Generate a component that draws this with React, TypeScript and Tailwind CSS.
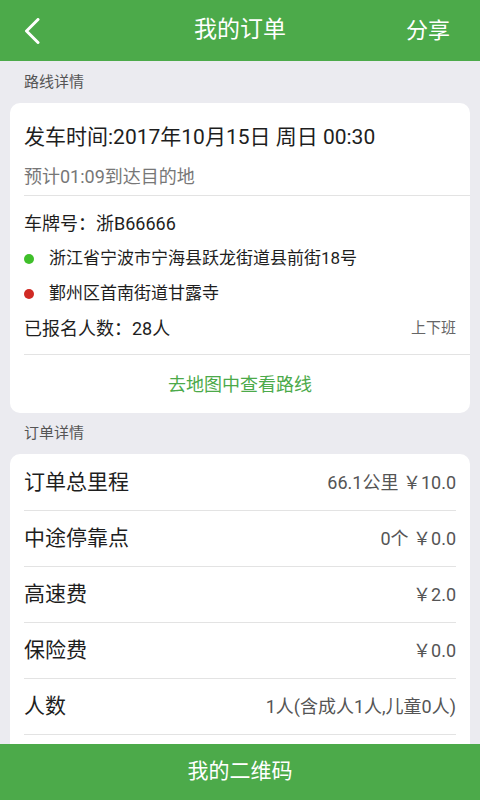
import React from 'react';

const font = { fontFamily: 'Roboto, "Noto Sans CJK SC", sans-serif' };

const feeRows = [
    { label: '订单总里程', value: '66.1公里 ￥10.0' },
    { label: '中途停靠点', value: '0个 ￥0.0' },
    { label: '高速费', value: '￥2.0' },
    { label: '保险费', value: '￥0.0' },
    { label: '人数', value: '1人(含成人1人,儿童0人)' },
];

const App = () => {
    return (
        <div className="h-[800px] w-[480px] flex flex-col bg-[#ebebf0] overflow-hidden" style={font}>
            {/* header */}
            <div className="h-[61px] shrink-0 bg-[#4caa4a] flex items-center px-[24px] text-white">
                <div className="w-[60px] flex items-center">
                    <svg width="16" height="26" viewBox="0 0 16 26" fill="none">
                        <polyline points="14,1.5 2.5,13 14,24.5" stroke="white" strokeWidth="3" strokeLinecap="round" strokeLinejoin="round" />
                    </svg>
                </div>
                <div className="flex-1 text-center text-[23px]">我的订单</div>
                <div className="w-[60px] text-right text-[22px] pr-[6px]">分享</div>
            </div>

            <div className="flex-1 overflow-hidden">
                <div className="h-[42px] flex items-center px-[24px] text-[15px] text-[#555]">路线详情</div>

                {/* route card */}
                <div className="mx-[10px] bg-white rounded-[10px] overflow-hidden">
                    <div className="pl-[14px]">
                        <div className="border-b border-[#e3e3e3] pr-[14px] pb-[5px]">
                            <div className="pt-[21px] leading-[26px] text-[21px] text-[#1e1e1e]">发车时间:2017年10月15日 周日 00:30</div>
                            <div className="mt-[14px] leading-[26px] text-[18px] text-[#777]">预计01:09到达目的地</div>
                        </div>
                        <div className="border-b border-[#e3e3e3] pr-[14px] pt-[10px] pb-[8px] text-[#1e1e1e]">
                            <div className="h-[35px] flex items-center text-[18px]">车牌号：浙B66666</div>
                            <div className="h-[35px] flex items-center text-[17px]">
                                <span className="w-[10px] h-[10px] rounded-full bg-[#3fbf2a] mr-[15px]" />
                                浙江省宁波市宁海县跃龙街道县前街18号
                            </div>
                            <div className="h-[35px] flex items-center text-[17px]">
                                <span className="w-[10px] h-[10px] rounded-full bg-[#d02a24] mr-[15px]" />
                                鄞州区首南街道甘露寺
                            </div>
                            <div className="h-[35px] flex items-center justify-between">
                                <span className="text-[18px]">已报名人数：28人</span>
                                <span className="text-[15px] text-[#666]">上下班</span>
                            </div>
                        </div>
                    </div>
                    <div className="h-[58px] flex items-center justify-center text-[18px] text-[#4caa4a]">去地图中查看路线</div>
                </div>

                <div className="h-[41px] flex items-center px-[24px] text-[15px] text-[#555]">订单详情</div>

                {/* fee card */}
                <div className="mx-[10px] pt-[1px] pb-[40px] bg-white rounded-[10px] overflow-hidden">
                    {feeRows.map((row) => (
                        <div key={row.label} className="mx-[14px] h-[56px] border-b border-[#e3e3e3] flex items-center justify-between">
                            <span className="text-[21px] text-[#1e1e1e]">{row.label}</span>
                            <span className="text-[18px] text-[#555]">{row.value}</span>
                        </div>
                    ))}
                </div>
            </div>

            {/* bottom button */}
            <div className="h-[56px] shrink-0 bg-[#4caa4a] flex items-center justify-center text-white text-[21px]">我的二维码</div>
        </div>
    );
};

export default App;
